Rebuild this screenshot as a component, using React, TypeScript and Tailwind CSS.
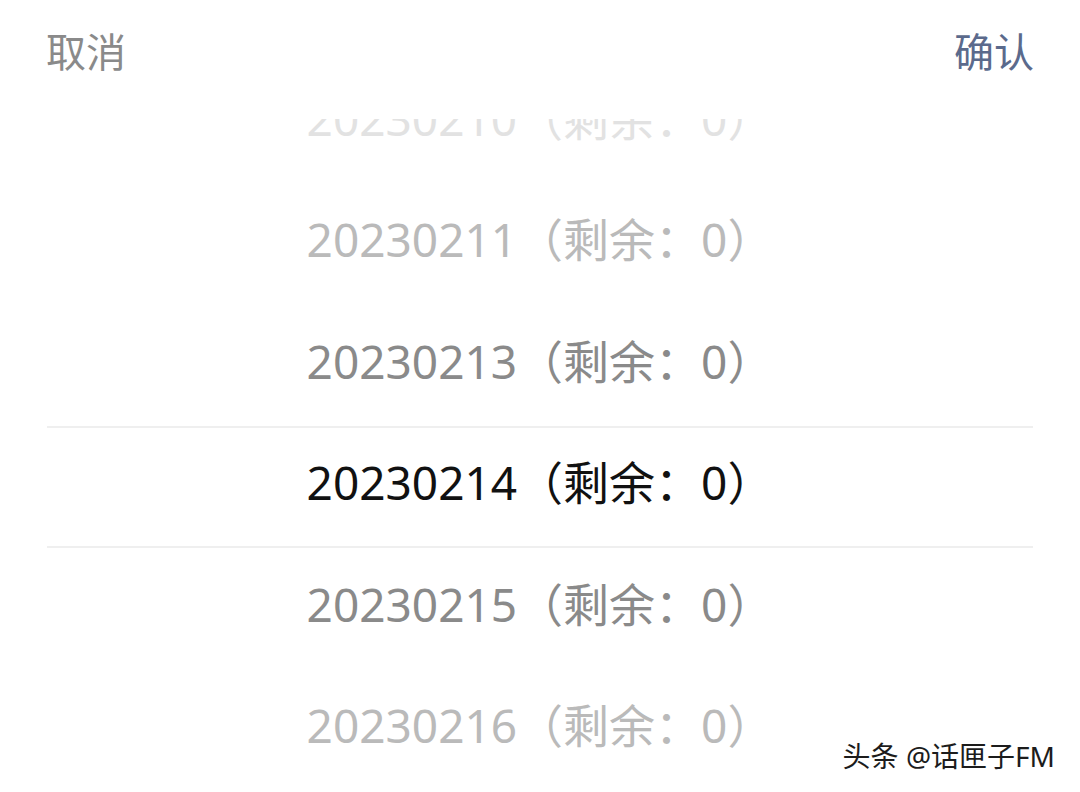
const rows = [
  { date: "20230210", color: "text-[#e2e2e2]" },
  { date: "20230211", color: "text-[#bababa]" },
  { date: "20230213", color: "text-[#8a8a8a]" },
  { date: "20230214", color: "text-[#111111]", selected: true },
  { date: "20230215", color: "text-[#8a8a8a]" },
  { date: "20230216", color: "text-[#bababa]" },
];

export default function App() {
  return (
    <div
      className="relative w-[1080px] h-[792px] overflow-hidden bg-white"
      style={{ fontFamily: '"Noto Sans", "Noto Sans CJK SC", sans-serif' }}
    >
      <div className="flex justify-between h-[119px] px-[46px] pt-[32px] text-[40px] leading-[40px]">
        <span className="text-[#8a8a8a]">取消</span>
        <span className="text-[#5b6a8c]">确认</span>
      </div>

      <div className="h-[673px] overflow-hidden px-[47px]">
        <div className="-mt-[57.5px]">
          {rows.map((r) => (
            <div
              key={r.date}
              className={`flex items-center justify-center h-[121.5px] pb-[8px] text-[46px] ${r.color} ${
                r.selected ? "border-y-2 border-[#efefef]" : ""
              }`}
            >
              {r.date}（剩余：0）
            </div>
          ))}
        </div>
      </div>

      <div
        className="absolute right-[25px] bottom-[20px] text-[28px] leading-[32px] text-[#1c1c1c]"
        style={{ textShadow: "1px 1px 0 #fff, -1px -1px 0 #fff, 1px -1px 0 #fff, -1px 1px 0 #fff" }}
      >
        头条 @话匣子FM
      </div>
    </div>
  );
}
